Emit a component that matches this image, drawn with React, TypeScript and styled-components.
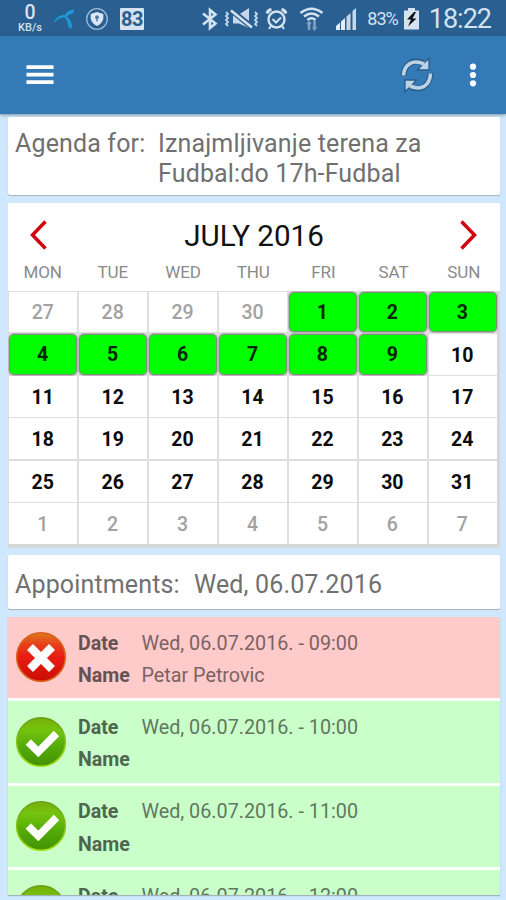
import React from 'react';
import styled, { createGlobalStyle } from 'styled-components';

const GlobalStyle = createGlobalStyle`
  *, *::before, *::after { box-sizing: border-box; }
  html, body { margin: 0; padding: 0; }
  body { font-family: Roboto, "Liberation Sans", sans-serif; background: #d0e8fd; overflow: hidden; }
  svg { display: block; flex: none; }
`;

const Screen = styled.div`
  width: 506px;
  height: 900px;
  display: flex;
  flex-direction: column;
  overflow: hidden;
  background: #d0e8fd;
`;

const StatusBar = styled.header`
  flex: none;
  height: 36px;
  display: flex;
  align-items: center;
  justify-content: space-between;
  padding: 2px 15px 0 17px;
  background: #295f91;
  color: #d5e2f0;
`;

const StatusGroup = styled.div<{ $gap: number }>`
  display: flex;
  align-items: center;
  gap: ${({ $gap }) => $gap}px;
`;

const NetSpeed = styled.div`
  width: 26px;
  display: flex;
  flex-direction: column;
  align-items: center;
`;

const SpeedValue = styled.span`
  font-size: 19.5px;
  font-weight: 500;
  line-height: 19px;
`;

const SpeedUnit = styled.span`
  font-size: 11px;
  font-weight: 500;
  line-height: 11px;
  margin-bottom: 2px;
`;

const BatteryText = styled.span`
  font-size: 18px;
  letter-spacing: -1px;
  line-height: 32px;
  margin: 0 5px 0 9px;
`;

const Clock = styled.span`
  font-size: 27px;
  letter-spacing: -1px;
  line-height: 34px;
  margin-left: 9px;
`;

const AppBar = styled.nav`
  flex: none;
  height: 78px;
  display: flex;
  align-items: center;
  justify-content: space-between;
  padding: 0 29px 0 26px;
  background: #337ab7;
  box-shadow: 0 1px 3px rgba(60, 70, 80, 0.55);
`;

const IconButton = styled.button`
  display: flex;
  padding: 0;
  border: 0;
  background: none;
  cursor: pointer;
`;

const Actions = styled.div`
  display: flex;
  align-items: center;
  gap: 34px;
`;

const Content = styled.main`
  flex: 1;
  min-height: 0;
  display: flex;
  flex-direction: column;
  padding: 3px 6px 5px 8px;
`;

const Card = styled.section<{ $height: number; $gap: number }>`
  flex: none;
  height: ${({ $height }) => $height}px;
  margin-bottom: ${({ $gap }) => $gap}px;
  background: #fff;
  border-radius: 2px;
  box-shadow: 0 1px 1px rgba(110, 110, 100, 0.45);
`;

const InfoCard = styled(Card)<{ $top: number }>`
  display: flex;
  padding: ${({ $top }) => $top}px 7px 0;
  font-size: 25px;
  line-height: 29.5px;
  letter-spacing: 0.15px;
  color: #707070;
`;

const InfoLabel = styled.span<{ $width: number }>`
  flex: none;
  width: ${({ $width }) => $width}px;
`;

const InfoValue = styled.span`
  flex: 1;
`;

const CalendarCard = styled(Card)`
  display: flex;
  flex-direction: column;
  border-radius: 1px;
  overflow: hidden;
  box-shadow: none;
  background: #d6d8d8;
`;

const MonthHeader = styled.div`
  flex: none;
  height: 60px;
  padding: 3px 22px 0;
  display: flex;
  align-items: center;
  justify-content: space-between;
  background: #fff;
`;

const MonthTitle = styled.h1`
  margin: 2px 0 0;
  font-size: 29.6px;
  font-weight: 400;
  line-height: 58px;
  color: #111;
`;

const WeekRow = styled.div`
  flex: none;
  height: 27.5px;
  padding-right: 2px;
  display: grid;
  grid-template-columns: repeat(7, 70.2px);
  background: #fff;
`;

const Weekday = styled.span`
  text-align: center;
  font-size: 17px;
  letter-spacing: -0.1px;
  line-height: 19px;
  margin-left: -1px;
  color: #8a8a8a;
`;

const DayGrid = styled.div`
  width: 489px;
  height: 253.5px;
  display: grid;
  grid-template-columns: repeat(7, 1fr);
  grid-template-rows: repeat(6, 1fr);
  gap: 1.5px;
  padding: 1px 0 0 1px;
  background: #dedede;
`;

type DayKind = 'open' | 'outside' | 'plain';

const Day = styled.div<{ $kind: DayKind }>`
  display: flex;
  align-items: center;
  justify-content: center;
  padding: ${({ $kind }) => ($kind === 'open' ? '1px 1px 0 0' : '2px 1px 0 0')};
  font-size: 19.5px;
  font-weight: ${({ $kind }) => ($kind === 'outside' ? 500 : 700)};
  color: ${({ $kind }) => ($kind === 'outside' ? '#a2a2a2' : $kind === 'open' ? '#042804' : '#0c0c0c')};
  background: ${({ $kind }) => ($kind === 'open' ? '#00ff00' : '#fff')};
  border: ${({ $kind }) => ($kind === 'open' ? '1px solid #779477' : '0')};
  border-radius: ${({ $kind }) => ($kind === 'open' ? 5 : 0)}px;
  box-shadow: ${({ $kind }) => ($kind === 'open' ? '0 0 0 1px #bdb4bd' : 'none')};
`;

const List = styled.ul`
  flex: 1;
  min-height: 0;
  overflow: hidden;
  margin: 0;
  padding: 0;
  list-style: none;
  background: #fafffa;
  box-shadow: 0 1px 1px rgba(110, 110, 100, 0.45);
`;

const Item = styled.li<{ $taken: boolean }>`
  height: 81.3px;
  margin-bottom: 3px;
  display: grid;
  grid-template-columns: 63.5px 63.5px 1fr;
  grid-template-rows: 32.3px 32.3px;
  padding: 10px 7px 0 6.5px;
  align-items: center;
  font-size: 19.75px;
  color: ${({ $taken }) => ($taken ? '#7b6262' : '#5f785f')};
  background: ${({ $taken }) => ($taken ? '#ffcaca' : '#caffca')};
`;

const StateIcon = styled.div`
  grid-row: 1 / 3;
  align-self: center;
  margin-top: -4px;
`;

const FieldName = styled.strong<{ $taken: boolean }>`
  font-weight: 700;
  font-size: 19.6px;
  color: ${({ $taken }) => ($taken ? '#675252' : '#4e664e')};
`;

const FieldValue = styled.span`
  white-space: nowrap;
`;

const TelenorIcon = () => (
  <svg width="22" height="22" viewBox="0 0 22 22" fill="#1c9ad8">
    <path d="M1 13.5C4 8.5 8 6.2 12 7.2C12.5 5 16 2.2 20 1.5C21.3 1.3 21.2 4.2 20 5C17.5 6.7 15 7.2 13.5 8.3C17 11 19.5 15.5 19 19.5C18.5 21 16 20.5 15.5 18.5C14.5 14.5 13.8 11.5 11.5 9.3C8 9.300 4.5 11.5 1.5 14.5Z" />
  </svg>
);

const ShieldIcon = () => (
  <svg width="24" height="24" viewBox="0 0 24 24">
    <circle cx="12" cy="12" r="10.3" fill="none" stroke="#9dbad4" strokeWidth="1.3" />
    <path d="M12 5L18.300 7V12Q17 16.500 12 19Q7 16.500 5.700 12V7Z" fill="#dce8f4" />
    <circle cx="12" cy="10.2" r="1.9" fill="#4b7ba8" />
    <path d="M11.3 11H12.7V14.500H11.3Z" fill="#4b7ba8" />
  </svg>
);

const PercentBadge = styled.div`
  width: 24px;
  height: 22px;
  margin-left: 1px;
  display: flex;
  align-items: center;
  justify-content: center;
  background: #d5e2f0;
  color: #295f91;
  font-size: 20px;
  font-weight: 700;
  letter-spacing: -0.5px;
  border-radius: 1px;
`;

const BluetoothIcon = () => (
  <svg width="18" height="24" viewBox="0 0 18 24" fill="none" stroke="#d5e2f0" strokeWidth="2.6">
    <path d="M2 6.5L14.5 16.5L9 21V3L14.5 7.5L2 17.5" />
  </svg>
);

const MuteIcon = () => (
  <svg width="36" height="24" viewBox="0 0 36 24">
    <path d="M9 7.500H15L25 1V21L15 16.500H9Z" fill="#c8d8e8" />
    <path d="M7 3L29 21" stroke="#295f91" strokeWidth="5.5" />
    <path d="M7 3.5L28 20.5" stroke="#d5e2f0" strokeWidth="2.5" />
    <path d="M2 5L4 7L2 9L4 11L2 13L4 15L2 17L4 19M31 5L33 7L31 9L33 11L31 13L33 15L31 17L33 19" stroke="#c3d5e6" strokeWidth="1.8" fill="none" />
  </svg>
);

const AlarmIcon = () => (
  <svg width="23" height="24" viewBox="0 0 23 24" fill="none" stroke="#d5e2f0">
    <circle cx="11.5" cy="12.500" r="8" strokeWidth="2.4" />
    <path d="M2 6.500Q3 3 6.5 2.500M21 6.5Q20 3 16.5 2.5" strokeWidth="3" />
    <path d="M7.5 12L11 15.5L16 10.5M6 19L4 22M17 19L19 22" strokeWidth="2" />
  </svg>
);

const WifiIcon = () => (
  <svg width="25" height="26" viewBox="0 0 25 26" fill="none" stroke="#d5e2f0">
    <path d="M1.5 7Q12.5 -1.5 23.5 7M5 10.5Q12.5 4.5 20 10.5M8.5 14Q12.5 10.5 16.5 14" strokeWidth="2.6" />
    <path d="M10 16V24M15.5 15V23" stroke="#82a2c0" strokeWidth="2.5" />
    <path d="M8 18L10 15.5L12 18M13.5 21L15.5 24L17.5 21" stroke="#82a2c0" strokeWidth="1.3" />
  </svg>
);

const SignalIcon = () => (
  <svg width="23" height="24" viewBox="0 0 23 24">
    <path d="M1 19L5 15.500V23H1ZM6 14.500L10 11V23H6Z" fill="#e2ecf5" />
    <path d="M11.500 9.500L15.500 6V23H11.500ZM17.500 4L21 1V23H17.500Z" fill="#c8d8e8" />
  </svg>
);

const BatteryIcon = () => (
  <svg width="17" height="24" viewBox="0 0 17 24">
    <path d="M5 1H12V3.500H16V22.500H1V3.500H5Z" fill="#d5e2f0" />
    <path d="M11 5L4 12.5H8L5 19.500L13.5 11.5H9.5L13 5Z" fill="#0a1118" />
  </svg>
);

const MenuIcon = () => (
  <svg width="28" height="22" viewBox="0 0 28 22" fill="#fff">
    <path d="M.5 1.3H27.5V5H.5ZM.5 8.800H27.5V12.500H.5ZM.5 16.3H27.5V20H.5Z" />
  </svg>
);

const RefreshIcon = () => (
  <svg width="36" height="38" viewBox="0 0 36 38">
    <g fill="none" stroke="#285d8b" strokeWidth="6">
      <path d="M4.500 20C5 8 14 3 24 7" />
      <path d="M31.5 17C31 30 22 35 12 31" />
    </g>
    <g fill="#bdd2e5" stroke="#285d8b" strokeWidth="1.3">
      <path d="M30 2.500V14H18.500L22.5 9.500L26 6Z" />
      <path d="M6 35.500V24H17.500L13.500 28.500L10 32Z" />
    </g>
    <g fill="none" stroke="#bdd2e5" strokeWidth="3.6">
      <path d="M4.500 19.500C5 8 14 3 25 8" />
      <path d="M31.500 17.5C31 30 22 35 11 30" />
    </g>
  </svg>
);

const MoreIcon = () => (
  <svg width="8" height="26" viewBox="0 0 8 26" fill="#fff">
    <circle cx="4" cy="4.7" r="3.1" />
    <circle cx="4" cy="13" r="3.1" />
    <circle cx="4" cy="21.3" r="3.1" />
  </svg>
);

const Chevron = ({ next = false }: { next?: boolean }) => (
  <svg width="18" height="30" viewBox="0 0 18 30" fill="none" stroke="#d0050d" strokeWidth="3.5">
    <path d={next ? 'M1.500 1.500L14.500 15L1.500 28.500' : 'M15.500 1.500L2.500 15L15.500 28.500'} />
  </svg>
);

const TakenIcon = () => (
  <svg width="52" height="52" viewBox="0 0 52 52">
    <defs>
      <linearGradient id="takenFill" x1="0" y1="0" x2="0" y2="1">
        <stop offset="0" stopColor="#dc7c1c" />
        <stop offset=".24" stopColor="#e8401a" />
        <stop offset=".5" stopColor="#e91c12" />
        <stop offset="1" stopColor="#c90d05" />
      </linearGradient>
    </defs>
    <circle cx="26" cy="26" r="24.3" fill="url(#takenFill)" stroke="#d9611a" strokeWidth="1.6" />
    <path d="M15 16L37 38M37 16L15 38" stroke="#fff" strokeWidth="8.4" />
  </svg>
);

const FreeIcon = () => (
  <svg width="52" height="52" viewBox="0 0 52 52">
    <defs>
      <linearGradient id="freeFill" x1="0" y1="0" x2="0" y2="1">
        <stop offset="0" stopColor="#79ae0c" />
        <stop offset=".25" stopColor="#74c40c" />
        <stop offset=".6" stopColor="#54ab08" />
        <stop offset="1" stopColor="#429204" />
      </linearGradient>
      <linearGradient id="freeRim" x1="0" y1="0" x2="0" y2="1">
        <stop offset="0" stopColor="#689e16" />
        <stop offset="1" stopColor="#a0e010" />
      </linearGradient>
    </defs>
    <circle cx="26" cy="26" r="24.3" fill="url(#freeFill)" stroke="url(#freeRim)" strokeWidth="1.6" />
    <path d="M13.300 26L23.300 36L41.500 17.500" fill="none" stroke="#fff" strokeWidth="7.500" />
  </svg>
);

const weekdays = ['MON', 'TUE', 'WED', 'THU', 'FRI', 'SAT', 'SUN'];

const days: { label: number; kind: DayKind }[] = [
  ...[27, 28, 29, 30].map((label) => ({ label, kind: 'outside' as DayKind })),
  ...Array.from({ length: 31 }, (_, i) => ({
    label: i + 1,
    kind: (i < 9 ? 'open' : 'plain') as DayKind,
  })),
  ...[1, 2, 3, 4, 5, 6, 7].map((label) => ({ label, kind: 'outside' as DayKind })),
];

const appointments = [
  { time: '09:00', name: 'Petar Petrovic' },
  { time: '10:00', name: '' },
  { time: '11:00', name: '' },
  { time: '12:00', name: '' },
];

export default function App() {
  return (
    <Screen>
      <GlobalStyle />
      <StatusBar>
        <StatusGroup $gap={10}>
          <NetSpeed>
            <SpeedValue>0</SpeedValue>
            <SpeedUnit>KB/s</SpeedUnit>
          </NetSpeed>
          <TelenorIcon />
          <ShieldIcon />
          <PercentBadge>83</PercentBadge>
        </StatusGroup>
        <StatusGroup $gap={0}>
          <StatusGroup $gap={11}>
            <StatusGroup $gap={5}>
              <BluetoothIcon />
              <MuteIcon />
              <AlarmIcon />
            </StatusGroup>
            <WifiIcon />
            <SignalIcon />
          </StatusGroup>
          <BatteryText>83%</BatteryText>
          <BatteryIcon />
          <Clock>18:22</Clock>
        </StatusGroup>
      </StatusBar>
      <AppBar>
        <IconButton aria-label="Menu"><MenuIcon /></IconButton>
        <Actions>
          <IconButton aria-label="Refresh"><RefreshIcon /></IconButton>
          <IconButton aria-label="More"><MoreIcon /></IconButton>
        </Actions>
      </AppBar>
      <Content>
        <InfoCard $height={78} $gap={8} $top={12}>
          <InfoLabel $width={143}>Agenda for:</InfoLabel>
          <InfoValue>Iznajmljivanje terena za<br />Fudbal:do 17h-Fudbal</InfoValue>
        </InfoCard>
        <CalendarCard $height={345} $gap={6.5}>
          <MonthHeader>
            <IconButton aria-label="Previous month"><Chevron /></IconButton>
            <MonthTitle>JULY 2016</MonthTitle>
            <IconButton aria-label="Next month"><Chevron next /></IconButton>
          </MonthHeader>
          <WeekRow>
            {weekdays.map((day) => <Weekday key={day}>{day}</Weekday>)}
          </WeekRow>
          <DayGrid>
            {days.map(({ label, kind }, i) => <Day key={i} $kind={kind}>{label}</Day>)}
          </DayGrid>
        </CalendarCard>
        <InfoCard $height={54} $gap={8.5} $top={15.5}>
          <InfoLabel $width={179}>Appointments:</InfoLabel>
          <InfoValue>Wed, 06.07.2016</InfoValue>
        </InfoCard>
        <List>
          {appointments.map(({ time, name }) => {
            const taken = name !== '';
            return (
              <Item key={time} $taken={taken}>
                <StateIcon>{taken ? <TakenIcon /> : <FreeIcon />}</StateIcon>
                <FieldName $taken={taken}>Date</FieldName>
                <FieldValue>Wed, 06.07.2016. - {time}</FieldValue>
                <FieldName $taken={taken}>Name</FieldName>
                <FieldValue>{name}</FieldValue>
              </Item>
            );
          })}
        </List>
      </Content>
    </Screen>
  );
}
